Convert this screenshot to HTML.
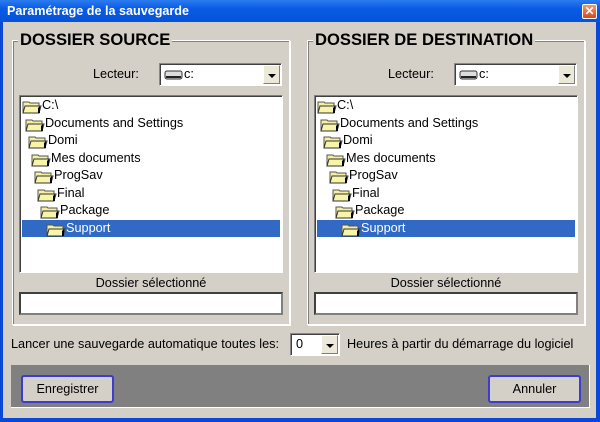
<!DOCTYPE html><html><head><meta charset="utf-8"><style>
*{margin:0;padding:0;box-sizing:border-box}
body{width:600px;height:422px;overflow:hidden;background:#0a48d8;font-family:"Liberation Sans",sans-serif;font-size:12.7px;color:#000;position:relative}
.a{position:absolute}
#title{left:0;top:0;width:600px;height:22px;background:linear-gradient(#2b7cf0,#0a5ae4 40%,#0553d8);color:#fff;font-weight:bold;font-size:12.6px;padding:4px 0 0 7px}
#close{left:582px;top:4px;width:15px;height:15px;background:linear-gradient(#f09a70,#d9471d);border:1px solid #fff;border-radius:2px;color:#fff;font-size:12px;font-weight:bold;line-height:13px;text-align:center}
#body{left:3px;top:22px;width:593px;height:396px;background:#d4d0c8}
.grp{border:1px solid #fff;box-shadow:inset 1px 1px 0 #808080, 1px 1px 0 #fff}
.gt{font-weight:bold;font-size:16.6px;background:#d4d0c8;padding:0 2px;line-height:17px}
.combo{background:#fff;border:1px solid #888;border-right-color:#fff;border-bottom-color:#fff;box-shadow:inset 1px 1px 0 #404040}
.arr{position:absolute;right:1px;top:1px;bottom:1px;width:17px;background:#ece9d8;border:1px solid #fff;border-right-color:#808080;border-bottom-color:#808080}
.arr:after{content:"";position:absolute;left:4px;top:8px;border:4px solid transparent;border-top:4px solid #000}
.tree{background:#fff;border:1px solid #808080;border-right-color:#fff;border-bottom-color:#fff;box-shadow:inset 1px 1px 0 #404040}
.it{position:absolute;height:17px;line-height:17px;white-space:nowrap}
.it svg{position:absolute;left:0;top:2px}
.it span{position:absolute;left:20px;top:0}
.sel{background:#316ac5;color:#fff}
.tb{background:#fff;border:2px solid #404040;border-right-color:#808080;border-bottom-color:#808080}
.btn{background:#d4d0c8;border:2px solid #3c3cd0;border-radius:3px;text-align:center;line-height:24px}
</style></head><body>
<div id="title" class="a">Paramétrage de la sauvegarde</div>
<div id="close" class="a">✕</div>
<div id="body" class="a"></div>

<svg width="0" height="0" style="position:absolute"><defs><g id="f"><path d="M1 3h6l1 1h9v10H1z" fill="#f4f0a0" stroke="#555" stroke-width="1"/><path d="M3 7h16l-2 7H1z" fill="#f8f4a8" stroke="#333"/><path d="M16 9l2-2v7h-2z" fill="#000"/></g></defs></svg>

<div class="a grp" style="left:12px;top:40px;width:278px;height:285px"></div>
<div class="a gt" style="left:18px;top:31px">DOSSIER SOURCE</div>
<div class="a" style="left:93px;top:67px">Lecteur:</div>
<div class="a combo" style="left:159px;top:63px;width:123px;height:23px"><svg class="a" style="left:4px;top:5px" width="20" height="12"><rect x="1" y="2" width="17" height="8" rx="2" fill="#ddd" stroke="#333"/><rect x="2" y="7" width="15" height="2" fill="#222"/></svg><span class="a" style="left:24px;top:3px">c:</span><div class="arr"></div></div>
<div class="a tree" style="left:19px;top:95px;width:264px;height:178px">
<div class="it" style="left:2px;top:1px"><svg width="20" height="15"><use href="#f"/></svg><span>C:\</span></div>
<div class="it" style="left:5px;top:19px"><svg width="20" height="15"><use href="#f"/></svg><span>Documents and Settings</span></div>
<div class="it" style="left:8px;top:36px"><svg width="20" height="15"><use href="#f"/></svg><span>Domi</span></div>
<div class="it" style="left:11px;top:54px"><svg width="20" height="15"><use href="#f"/></svg><span>Mes documents</span></div>
<div class="it" style="left:14px;top:71px"><svg width="20" height="15"><use href="#f"/></svg><span>ProgSav</span></div>
<div class="it" style="left:17px;top:89px"><svg width="20" height="15"><use href="#f"/></svg><span>Final</span></div>
<div class="it" style="left:20px;top:106px"><svg width="20" height="15"><use href="#f"/></svg><span>Package</span></div>
<div class="it sel" style="left:2px;top:124px;width:258px"><svg width="20" height="15" style="left:24px"><use href="#f"/></svg><span style="left:44px">Support</span></div>
</div>
<div class="a" style="left:19px;top:276px;width:264px;text-align:center">Dossier sélectionné</div>
<div class="a tb" style="left:19px;top:292px;width:264px;height:23px"></div>

<div class="a grp" style="left:307px;top:40px;width:278px;height:285px"></div>
<div class="a gt" style="left:313px;top:31px">DOSSIER DE DESTINATION</div>
<div class="a" style="left:388px;top:67px">Lecteur:</div>
<div class="a combo" style="left:454px;top:63px;width:123px;height:23px"><svg class="a" style="left:4px;top:5px" width="20" height="12"><rect x="1" y="2" width="17" height="8" rx="2" fill="#ddd" stroke="#333"/><rect x="2" y="7" width="15" height="2" fill="#222"/></svg><span class="a" style="left:24px;top:3px">c:</span><div class="arr"></div></div>
<div class="a tree" style="left:314px;top:95px;width:264px;height:178px">
<div class="it" style="left:2px;top:1px"><svg width="20" height="15"><use href="#f"/></svg><span>C:\</span></div>
<div class="it" style="left:5px;top:19px"><svg width="20" height="15"><use href="#f"/></svg><span>Documents and Settings</span></div>
<div class="it" style="left:8px;top:36px"><svg width="20" height="15"><use href="#f"/></svg><span>Domi</span></div>
<div class="it" style="left:11px;top:54px"><svg width="20" height="15"><use href="#f"/></svg><span>Mes documents</span></div>
<div class="it" style="left:14px;top:71px"><svg width="20" height="15"><use href="#f"/></svg><span>ProgSav</span></div>
<div class="it" style="left:17px;top:89px"><svg width="20" height="15"><use href="#f"/></svg><span>Final</span></div>
<div class="it" style="left:20px;top:106px"><svg width="20" height="15"><use href="#f"/></svg><span>Package</span></div>
<div class="it sel" style="left:2px;top:124px;width:258px"><svg width="20" height="15" style="left:24px"><use href="#f"/></svg><span style="left:44px">Support</span></div>
</div>
<div class="a" style="left:314px;top:276px;width:264px;text-align:center">Dossier sélectionné</div>
<div class="a tb" style="left:314px;top:292px;width:264px;height:23px"></div>

<div class="a" style="left:11px;top:337px">Lancer une sauvegarde automatique toutes les:</div>
<div class="a combo" style="left:290px;top:333px;width:50px;height:23px"><span class="a" style="left:5px;top:3px">0</span><div class="arr"></div></div>
<div class="a" style="left:347px;top:337px">Heures à partir du démarrage du logiciel</div>
<div class="a" style="left:11px;top:365px;width:579px;height:43px;background:#808080;border-bottom:1px solid #fff;border-right:1px solid #fff"></div>
<div class="a btn" style="left:21px;top:375px;width:93px;height:28px">Enregistrer</div>
<div class="a btn" style="left:488px;top:375px;width:93px;height:28px">Annuler</div>
</body></html>
